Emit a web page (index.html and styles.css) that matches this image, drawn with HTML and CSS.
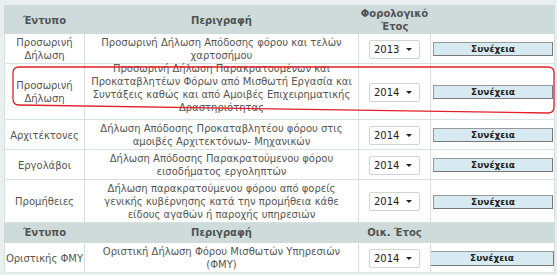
FILE: index.html
```html
<!DOCTYPE html>
<html lang="el">
<head>
  <meta charset="UTF-8" />
  <title>Έντυπα</title>
  <link rel="stylesheet" href="styles.css">
</head>
<body>
  <div class="frame">
    <table class="forms">
      <colgroup>
        <col class="c-form">
        <col class="c-desc">
        <col class="c-year">
        <col class="c-go">
      </colgroup>
      <tr class="head">
        <th>Έντυπο</th>
        <th>Περιγραφή</th>
        <th>Φορολογικό<br>Έτος</th>
        <th></th>
      </tr>
      <tr>
        <td>Προσωρινή<br>Δήλωση</td>
        <td>Προσωρινή Δήλωση Απόδοσης φόρου και τελών<br>χαρτοσήμου</td>
        <td><div class="picker"><select><option>2013</option></select></div></td>
        <td><button>Συνέχεια</button></td>
      </tr>
      <tr class="tall">
        <td>Προσωρινή<br>Δήλωση</td>
        <td><div class="lift">Προσωρινή Δήλωση Παρακρατουμένων και<br>Προκαταβλητέων Φόρων από Μισθωτή Εργασία και<br>Συντάξεις καθώς και από Αμοιβές Επιχειρηματικής<br>Δραστηριότητας</div></td>
        <td><div class="picker"><select><option>2014</option></select></div></td>
        <td><button>Συνέχεια</button></td>
      </tr>
      <tr>
        <td>Αρχιτέκτονες</td>
        <td>Δήλωση Απόδοσης Προκαταβλητέου φόρου στις<br>αμοιβές Αρχιτεκτόνων- Μηχανικών</td>
        <td><div class="picker"><select><option>2014</option></select></div></td>
        <td><button>Συνέχεια</button></td>
      </tr>
      <tr>
        <td>Εργολάβοι</td>
        <td>Δήλωση Απόδοσης Παρακρατούμενου φόρου<br>εισοδήματος εργοληπτών</td>
        <td><div class="picker"><select><option>2014</option></select></div></td>
        <td><button>Συνέχεια</button></td>
      </tr>
      <tr>
        <td>Προμήθειες</td>
        <td>Δήλωση παρακρατούμενου φόρου από φορείς<br>γενικής κυβέρνησης κατά την προμήθεια κάθε<br>είδους αγαθών ή παροχής υπηρεσιών</td>
        <td><div class="picker"><select><option>2014</option></select></div></td>
        <td><button>Συνέχεια</button></td>
      </tr>
      <tr class="head single">
        <th>Έντυπο</th>
        <th>Περιγραφή</th>
        <th>Οικ. Έτος</th>
        <th></th>
      </tr>
      <tr class="last">
        <td class="nowrap">Οριστικής ΦΜΥ</td>
        <td>Οριστική Δήλωση Φόρου Μισθωτών Υπηρεσιών<br>(ΦΜΥ)</td>
        <td><div class="picker"><select><option>2014</option></select></div></td>
        <td><button>Συνέχεια</button></td>
      </tr>
    </table>

    <svg class="mark" width="557" height="275" viewBox="0 0 557 275">
      <path d="M19 67 H548 Q554 67 554 73 V107 Q554 113 548 113 L19 105 Q13 105 13 99 V73 Q13 67 19 67 Z" />
    </svg>
  </div>
</body>
</html>
```

FILE: styles.css
```css
body {
  margin: 0;
  background: #e9eeee;
  font-family: "DejaVu Sans", Verdana, sans-serif;
  font-size: 10px;
  color: #555;
}
.frame {
  position: relative;
  padding: 5px 3px 4px 4px;
}
.forms {
  width: 550px;
  border-collapse: collapse;
  table-layout: fixed;
  background: #fff;
}
.c-form { width: 80px; }
.c-desc { width: 274px; }
.c-year { width: 72px; }
.c-go { width: 124px; }
.forms td, .forms th {
  border: 1px solid #d6e1e1;
  text-align: center;
  vertical-align: middle;
  line-height: 13px;
  padding: 2px 0 1px;
}
.forms tr.head th {
  background: #cfdada;
  border-color: #cfdada;
  color: #4f5555;
  font-weight: bold;
  padding: 1px 0 0;
}
.forms tr.single th {
  padding: 3px 0 3px;
}
.forms tr.last td {
  padding: 2px 0 1px;
  border-bottom-color: #e0e6e6;
}
.nowrap {
  white-space: nowrap;
}
.lift {
  margin: -4px 0 4px;
}
.picker {
  position: relative;
  width: 51px;
  height: 19px;
  margin: 0 auto;
}
.picker select {
  appearance: none;
  -webkit-appearance: none;
  width: 51px;
  height: 19px;
  border: 1px solid #cfd6d6;
  border-radius: 2px;
  background: #fff;
  font-family: "DejaVu Sans", Verdana, sans-serif;
  font-size: 10px;
  color: #222;
  padding: 0 0 0 4px;
}
.picker::after {
  content: "";
  position: absolute;
  right: 8px;
  top: 8px;
  border-left: 3px solid transparent;
  border-right: 3px solid transparent;
  border-top: 3px solid #222;
}
button {
  display: block;
  width: 120px;
  height: 14px;
  margin: 0 1px 0 2px;
  padding: 0;
  background: #d7e9f1;
  border: 1px solid #777;
  border-top-color: #999;
  border-left-color: #999;
  font-family: "DejaVu Sans", Verdana, sans-serif;
  font-size: 9px;
  font-weight: bold;
  color: #1f1f1f;
  line-height: 12px;
}
.last button {
  width: 124px;
  margin: 0 0 0 -1px;
  height: 15px;
}
.mark {
  position: absolute;
  left: 0;
  top: 0;
  pointer-events: none;
}
.mark path {
  fill: none;
  stroke: #e0202a;
  stroke-width: 1.3;
}
```
